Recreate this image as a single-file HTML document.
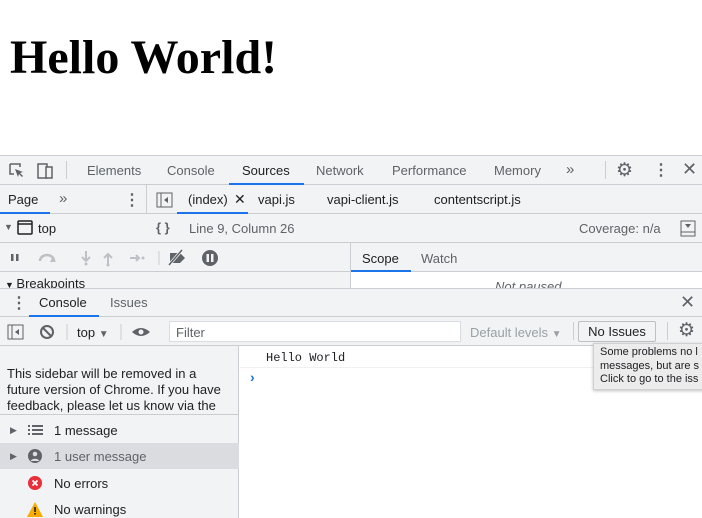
<!DOCTYPE html><html><head><style>
*{margin:0;padding:0;box-sizing:border-box}
body{width:702px;height:518px;overflow:hidden;background:#fff;font-family:"Liberation Sans",sans-serif;font-size:13px;color:#202124;position:relative}
.a{position:absolute;white-space:nowrap}
.bar{position:absolute;left:0;width:702px;background:#f1f3f4;border-bottom:1px solid #cacdd1}
.g{color:#5f6368}
.ul{position:absolute;height:2px;background:#1a73e8}
.vl{position:absolute;width:1px;background:#cacdd1}
</style></head><body>
<div class="a" style="left:10px;top:30px;font:bold 48px 'Liberation Serif',serif;color:#000">Hello World!</div>

<div class="bar" style="top:155px;height:30px;border-top:1px solid #cacdd1"></div>
<svg class="a" style="left:8px;top:162px" width="48" height="18"><path d="M2 2h10v3M2 2v10h4" fill="none" stroke="#5f6368" stroke-width="1.5"/><path d="M7 7l8 3-3 1 3 3-1 1-3-3-1 3z" fill="#5f6368"/><rect x="30" y="2" width="9" height="14" fill="none" stroke="#5f6368" stroke-width="1.5"/><rect x="38" y="5" width="6" height="11" fill="#f1f3f4" stroke="#5f6368" stroke-width="1.5"/></svg>
<div class="vl" style="left:66px;top:161px;height:18px"></div>
<div class="a g" style="left:87px;top:163px">Elements</div>
<div class="a g" style="left:167px;top:163px">Console</div>
<div class="a" style="left:242px;top:163px">Sources</div>
<div class="ul" style="left:229px;top:183px;width:75px"></div>
<div class="a g" style="left:316px;top:163px">Network</div>
<div class="a g" style="left:392px;top:163px">Performance</div>
<div class="a g" style="left:494px;top:163px">Memory</div>
<div class="a g" style="left:566px;top:161px;font-size:15px">»</div>
<div class="vl" style="left:605px;top:161px;height:18px"></div>
<div class="a g" style="left:616px;top:159px;font-size:19px">⚙</div>
<div class="a g" style="left:653px;top:160px;font-size:16px;font-weight:bold">⋮</div>
<div class="a g" style="left:682px;top:159px;font-size:18px">✕</div>

<div class="bar" style="top:185px;height:29px"></div>
<div class="vl" style="left:146px;top:185px;height:58px"></div>
<div class="a" style="left:8px;top:192px">Page</div>
<div class="ul" style="left:0;top:212px;width:50px"></div>
<div class="a g" style="left:59px;top:190px;font-size:15px">»</div>
<div class="a g" style="left:124px;top:190px;font-size:16px;font-weight:bold">⋮</div>
<svg class="a" style="left:156px;top:192px" width="17" height="16"><rect x="1" y="1" width="15" height="14" fill="none" stroke="#5f6368"/><line x1="5" y1="1" x2="5" y2="15" stroke="#5f6368"/><path d="M12 5v6l-4-3z" fill="#5f6368"/></svg>
<div class="a" style="left:188px;top:192px">(index)</div>
<div class="a" style="left:234px;top:191px;font-size:14px">✕</div>
<div class="ul" style="left:177px;top:212px;width:71px"></div>
<div class="a" style="left:258px;top:192px">vapi.js</div>
<div class="a" style="left:327px;top:192px">vapi-client.js</div>
<div class="a" style="left:434px;top:192px">contentscript.js</div>

<div class="bar" style="top:214px;height:29px"></div>
<div class="a g" style="left:4px;top:222px;font-size:9px">▼</div>
<svg class="a" style="left:17px;top:220px" width="16" height="15"><rect x="1" y="1" width="14" height="13" rx="1" fill="none" stroke="#202124" stroke-width="1.5"/><line x1="1" y1="4" x2="15" y2="4" stroke="#202124" stroke-width="1.5"/></svg>
<div class="a" style="left:38px;top:221px">top</div>
<div class="a g" style="left:156px;top:220px;font-weight:bold">{ }</div>
<div class="a g" style="left:189px;top:221px">Line 9, Column 26</div>
<div class="a g" style="left:579px;top:221px">Coverage: n/a</div>
<svg class="a" style="left:680px;top:220px" width="16" height="17"><rect x="1" y="1" width="14" height="15" fill="none" stroke="#5f6368"/><line x1="1" y1="12" x2="15" y2="12" stroke="#5f6368"/><path d="M5 4h6l-3 4z" fill="#5f6368"/></svg>

<div class="bar" style="top:243px;height:29px"></div>
<div class="vl" style="left:350px;top:243px;height:45px"></div>
<svg class="a" style="left:8px;top:249px" width="210" height="18"><rect x="3" y="5" width="2.5" height="7" fill="#5f6368"/><rect x="8" y="5" width="2.5" height="7" fill="#5f6368"/><path d="M32 12a7 6 0 0 1 14 0" fill="none" stroke="#bdc1c6" stroke-width="2.5"/><path d="M44 9l4 4h-6z" fill="#bdc1c6"/><path d="M78 2v9M74 8l4 4 4-4" fill="none" stroke="#bdc1c6" stroke-width="2"/><circle cx="78" cy="15" r="1.5" fill="#bdc1c6"/><path d="M100 15v-9M96 9l4-4 4 4" fill="none" stroke="#bdc1c6" stroke-width="2"/><circle cx="100" cy="16" r="1.5" fill="#bdc1c6"/><path d="M122 9h9M128 6l3 3-3 3" fill="none" stroke="#bdc1c6" stroke-width="2"/><circle cx="135" cy="9" r="1.5" fill="#bdc1c6"/><line x1="151" y1="2" x2="151" y2="16" stroke="#cacdd1"/><path d="M162 4h10l5 5-5 5h-10z" fill="#5f6368"/><line x1="161" y1="16" x2="174" y2="1" stroke="#f1f3f4" stroke-width="3"/><line x1="161" y1="16" x2="174" y2="1" stroke="#5f6368" stroke-width="1.5"/><circle cx="202" cy="9" r="8" fill="#5f6368"/><rect x="198.5" y="5" width="2.5" height="8" fill="#f1f3f4"/><rect x="203" y="5" width="2.5" height="8" fill="#f1f3f4"/></svg>
<div class="a" style="left:362px;top:251px">Scope</div>
<div class="a g" style="left:421px;top:251px">Watch</div>
<div class="ul" style="left:351px;top:270px;width:60px"></div>
<div class="a" style="left:0;top:272px;width:350px;height:16px;background:#f1f3f4;overflow:hidden"><span style="position:absolute;left:5px;top:4px;font-size:9px">▼ <span style="font-size:13px">Breakpoints</span></span></div>
<div class="a g" style="left:351px;top:272px;width:351px;height:16px;overflow:hidden"><span style="position:absolute;left:144px;top:7px;font-style:italic">Not paused</span></div>

<div class="bar" style="top:288px;height:29px;border-top:1px solid #cacdd1"></div>
<div class="a g" style="left:11px;top:293px;font-size:16px;font-weight:bold">⋮</div>
<div class="a" style="left:39px;top:295px">Console</div>
<div class="ul" style="left:29px;top:315px;width:70px"></div>
<div class="a g" style="left:110px;top:295px">Issues</div>
<div class="a g" style="left:680px;top:292px;font-size:18px">✕</div>

<div class="bar" style="top:317px;height:29px"></div>
<svg class="a" style="left:7px;top:323px" width="150" height="18"><rect x="1" y="2" width="15" height="14" fill="none" stroke="#5f6368"/><line x1="5" y1="2" x2="5" y2="16" stroke="#5f6368"/><path d="M12 6v6l-4-3z" fill="#5f6368"/><circle cx="40" cy="9" r="6" fill="none" stroke="#5f6368" stroke-width="2"/><line x1="36" y1="5" x2="44" y2="13" stroke="#5f6368" stroke-width="2"/><line x1="60" y1="1" x2="60" y2="17" stroke="#cacdd1"/><line x1="114" y1="1" x2="114" y2="17" stroke="#cacdd1"/><path d="M125 9q9-8 18 0q-9 8-18 0z" fill="#5f6368"/><circle cx="134" cy="9" r="2.5" fill="#f1f3f4"/><line x1="154" y1="1" x2="154" y2="17" stroke="#cacdd1"/></svg>
<div class="a" style="left:77px;top:325px">top <span class="g" style="font-size:10px">▼</span></div>
<div class="a" style="left:169px;top:321px;width:292px;height:21px;background:#fff;border:1px solid #dadce0"><span class="g" style="position:absolute;left:6px;top:3px">Filter</span></div>
<div class="a" style="left:470px;top:325px;color:#9aa0a6">Default levels <span style="font-size:10px">▼</span></div>
<div class="vl" style="left:573px;top:322px;height:18px"></div>
<div class="a" style="left:578px;top:321px;width:78px;height:21px;border:1px solid #bdc1c6;border-radius:2px;background:#f1f3f4;text-align:center;line-height:19px">No Issues</div>
<div class="vl" style="left:667px;top:322px;height:18px"></div>
<div class="a g" style="left:678px;top:319px;font-size:19px">⚙</div>

<div class="a" style="left:0;top:346px;width:239px;height:172px;background:#f1f3f4;border-right:1px solid #cacdd1"></div>
<div class="a" style="left:7px;top:366px;line-height:16px">This sidebar will be removed in a<br>future version of Chrome. If you have<br>feedback, please let us know via the</div>
<div class="a" style="left:0;top:414px;width:239px;height:1px;background:#cacdd1"></div>
<div class="a" style="left:0;top:443px;width:239px;height:26px;background:#dadce0"></div>
<div class="a g" style="left:10px;top:425px;font-size:9px">▶</div>
<div class="a g" style="left:10px;top:451px;font-size:9px">▶</div>
<svg class="a" style="left:27px;top:423px" width="18" height="95"><g fill="#5f6368"><rect x="1" y="2" width="2" height="2"/><rect x="5" y="2" width="11" height="2"/><rect x="1" y="6" width="2" height="2"/><rect x="5" y="6" width="11" height="2"/><rect x="1" y="10" width="2" height="2"/><rect x="5" y="10" width="11" height="2"/><circle cx="8" cy="33" r="7"/></g><circle cx="8" cy="31" r="2.3" fill="#dadce0"/><path d="M3.5 38a5 4 0 0 1 9 0z" fill="#dadce0"/><circle cx="8" cy="60" r="7" fill="#e8303a"/><path d="M5.5 57.5l5 5M10.5 57.5l-5 5" stroke="#fff" stroke-width="1.8"/><path d="M8 79l8 15h-16z" fill="#f9ab00"/><rect x="7.2" y="84" width="1.6" height="5" fill="#202124"/><rect x="7.2" y="90" width="1.6" height="1.6" fill="#202124"/></svg>
<div class="a" style="left:54px;top:423px">1 message</div>
<div class="a g" style="left:54px;top:449px">1 user message</div>
<div class="a" style="left:54px;top:476px">No errors</div>
<div class="a" style="left:54px;top:502px">No warnings</div>

<div class="a" style="left:266px;top:351px;font:12px 'Liberation Mono',monospace;color:#202124">Hello World</div>
<div class="a" style="left:240px;top:367px;width:462px;height:1px;background:#f0f0f0"></div>
<div class="a" style="left:250px;top:369px;color:#1a73e8;font-weight:bold;font-size:14px">›</div>
<div class="a" style="left:593px;top:343px;width:115px;height:47px;background:#ececec;border:1px solid #d0d0d0;box-shadow:0 1px 3px rgba(0,0,0,.25);font-size:11px;line-height:13.5px;padding:2px 0 0 6px;overflow:hidden">Some problems no l<br>messages, but are s<br>Click to go to the iss</div>
</body></html>
